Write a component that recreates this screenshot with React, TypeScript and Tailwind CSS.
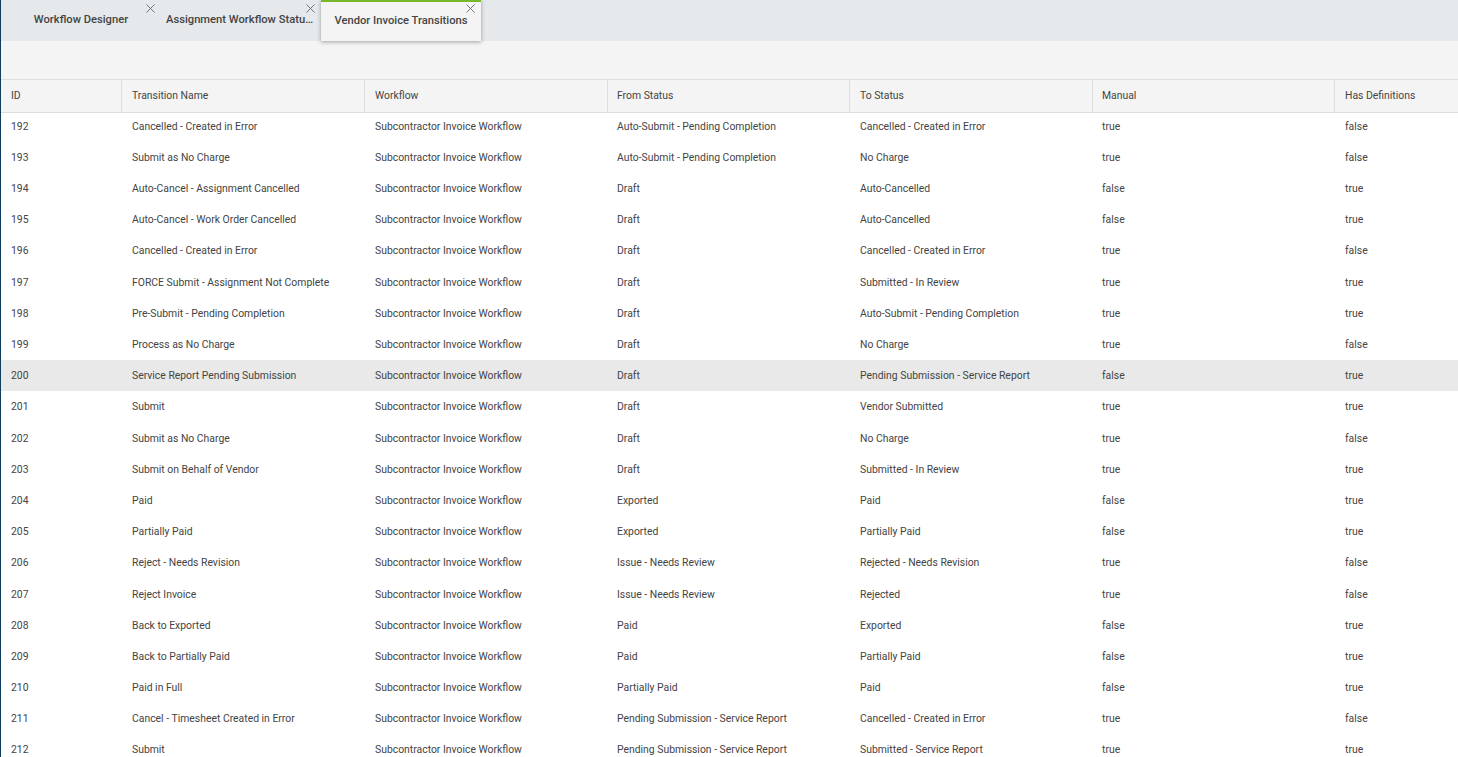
import { X } from 'lucide-react'

const COLUMNS = ['ID', 'Transition Name', 'Workflow', 'From Status', 'To Status', 'Manual', 'Has Definitions']
const GRID = 'grid grid-cols-[121px_243px_243px_242px_243px_242px_123px]'
// the 4th and 6th columns sit a pixel tighter in the source grid
const CELL_PAD = ['pl-[10px]', 'pl-[10px]', 'pl-[10px]', 'pl-[9px]', 'pl-[10px]', 'pl-[9px]', 'pl-[10px]']

const WF = 'Subcontractor Invoice Workflow'

const ROWS: string[][] = [
  ['192', 'Cancelled - Created in Error', WF, 'Auto-Submit - Pending Completion', 'Cancelled - Created in Error', 'true', 'false'],
  ['193', 'Submit as No Charge', WF, 'Auto-Submit - Pending Completion', 'No Charge', 'true', 'false'],
  ['194', 'Auto-Cancel - Assignment Cancelled', WF, 'Draft', 'Auto-Cancelled', 'false', 'true'],
  ['195', 'Auto-Cancel - Work Order Cancelled', WF, 'Draft', 'Auto-Cancelled', 'false', 'true'],
  ['196', 'Cancelled - Created in Error', WF, 'Draft', 'Cancelled - Created in Error', 'true', 'false'],
  ['197', 'FORCE Submit - Assignment Not Complete', WF, 'Draft', 'Submitted - In Review', 'true', 'true'],
  ['198', 'Pre-Submit - Pending Completion', WF, 'Draft', 'Auto-Submit - Pending Completion', 'true', 'true'],
  ['199', 'Process as No Charge', WF, 'Draft', 'No Charge', 'true', 'false'],
  ['200', 'Service Report Pending Submission', WF, 'Draft', 'Pending Submission - Service Report', 'false', 'true'],
  ['201', 'Submit', WF, 'Draft', 'Vendor Submitted', 'true', 'true'],
  ['202', 'Submit as No Charge', WF, 'Draft', 'No Charge', 'true', 'false'],
  ['203', 'Submit on Behalf of Vendor', WF, 'Draft', 'Submitted - In Review', 'true', 'true'],
  ['204', 'Paid', WF, 'Exported', 'Paid', 'false', 'true'],
  ['205', 'Partially Paid', WF, 'Exported', 'Partially Paid', 'false', 'true'],
  ['206', 'Reject - Needs Revision', WF, 'Issue - Needs Review', 'Rejected - Needs Revision', 'true', 'false'],
  ['207', 'Reject Invoice', WF, 'Issue - Needs Review', 'Rejected', 'true', 'false'],
  ['208', 'Back to Exported', WF, 'Paid', 'Exported', 'false', 'true'],
  ['209', 'Back to Partially Paid', WF, 'Paid', 'Partially Paid', 'false', 'true'],
  ['210', 'Paid in Full', WF, 'Partially Paid', 'Paid', 'false', 'true'],
  ['211', 'Cancel - Timesheet Created in Error', WF, 'Pending Submission - Service Report', 'Cancelled - Created in Error', 'true', 'false'],
  ['212', 'Submit', WF, 'Pending Submission - Service Report', 'Submitted - Service Report', 'true', 'true'],
]

function Tab({ label, active, truncated }: { label: string; active?: boolean; truncated?: boolean }) {
  return (
    <div
      className={
        active
          ? 'relative z-10 flex h-[41px] w-[160px] items-center justify-center border-t-2 border-[#76b82a] bg-[#f4f4f4] shadow-[0_1px_4px_rgba(0,0,0,0.35)]'
          : 'relative flex h-[41px] w-[160px] items-center justify-center pb-[1px]'
      }
    >
      <span className={`text-[11.2px] font-medium text-[#444] ${truncated ? 'ml-[5px] mr-[5px] truncate' : ''}`}>{label}</span>
      <X
        className={`absolute right-[3px] h-[15px] w-[15px] text-[#666] ${active ? '-top-[1px]' : 'top-[1px]'}`}
        strokeWidth={1.4}
      />
    </div>
  )
}

export default function App() {
  return (
    <div className="h-[757px] w-[1458px] overflow-hidden border-l border-[#0f3d5e] bg-white font-['Roboto',sans-serif] text-[10.4px] text-[#444]">
      <div className="flex h-[41px] bg-[#e5e9ec]">
        <Tab label="Workflow Designer" />
        <Tab label="Assignment Workflow Status Transitions" truncated />
        <Tab label="Vendor Invoice Transitions" active />
      </div>
      <div className="h-[39px] border-b border-[#dedede] bg-[#f4f4f4]" />
      <div className={`${GRID} relative z-10 h-[33px] border-b border-[#dedede] bg-[#f4f4f4]`}>
        {COLUMNS.map((c, i) => (
          <div key={c} className={`flex items-center ${CELL_PAD[i]} ${i < COLUMNS.length - 1 ? 'border-r border-[#dedede]' : ''}`}>
            {c}
          </div>
        ))}
      </div>
      {/* grid body starts a bit under the header, first row's top is hidden */}
      <div className="-mt-[2.4px]">
        {ROWS.map((row) => (
          <div key={row[0]} className={`${GRID} h-[31.2px] ${row[0] === '200' ? 'bg-[#e9e9e9]' : ''}`}>
            {row.map((cell, i) => (
              <div key={i} className={`flex items-center truncate pt-[0.7px] ${CELL_PAD[i]}`}>
                {cell}
              </div>
            ))}
          </div>
        ))}
      </div>
    </div>
  )
}
